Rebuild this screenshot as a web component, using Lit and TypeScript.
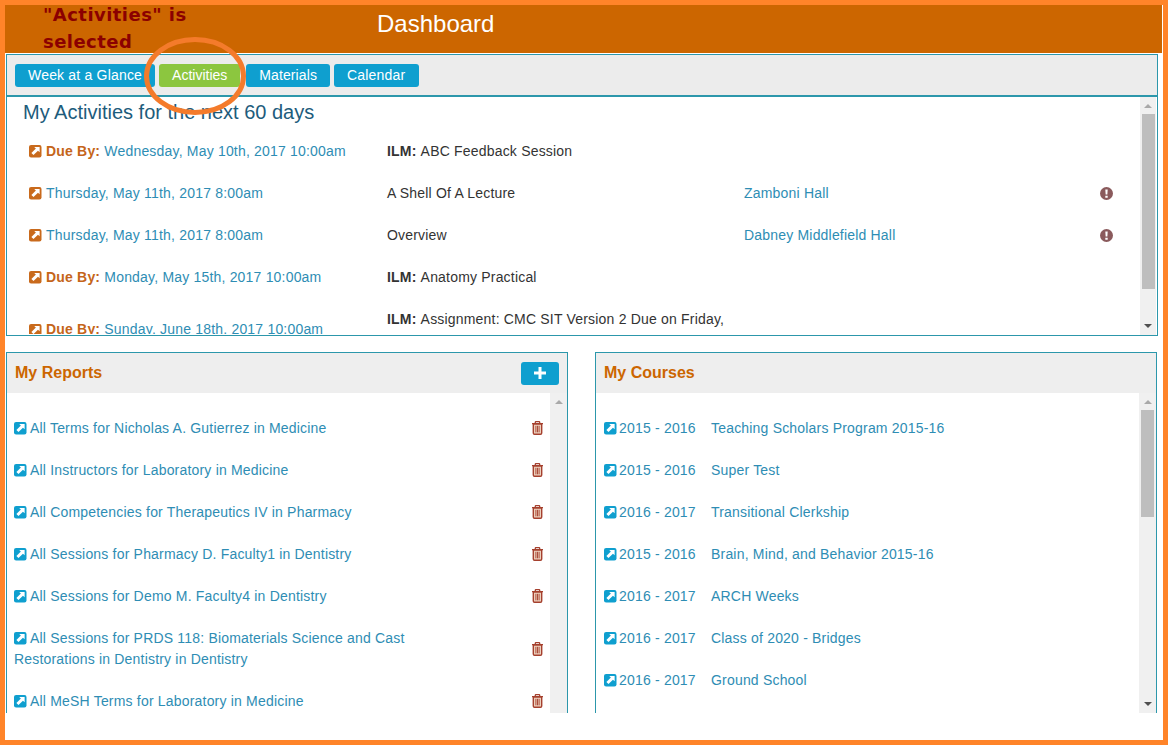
import { LitElement, html, css } from 'lit';
import { customElement } from 'lit/decorators.js';

const linkIcon = (tone: string) => html`<svg class="ico ${tone}" viewBox="0 0 12 12">
  <rect width="12" height="12" rx="2" fill="currentColor"></rect>
  <path d="M5 1.800H10.200V7L8.600 5.400 4.300 9.700 2.300 7.700 6.600 3.400z" fill="#fff"></path>
</svg>`;

const trashIcon = html`<svg class="trash" viewBox="0 0 11 14">
  <path d="M0 2.700h11M3.300 2.500V1.300q0-.7.7-.7h3q.7 0 .7.7v1.200" fill="none" stroke="currentColor" stroke-width="1.300"></path>
  <path d="M1.300 3v9q0 1.300 1.200 1.300h6q1.200 0 1.200-1.300V3z" fill="#ecd0bd" stroke="currentColor" stroke-width="1.400"></path>
  <path d="M3.900 4.800v6.500M5.500 4.800v6.500M7.100 4.800v6.500" stroke="currentColor" stroke-width=".9"></path>
</svg>`;

const alertIcon = html`<svg class="alert" viewBox="0 0 12 12">
  <circle cx="6" cy="6" r="6" fill="currentColor"></circle>
  <path d="M4.900 2.200h2.200l-.3 4.800H5.200zM4.900 8h2.200v2H4.900z" fill="#fff"></path>
</svg>`;

const activities = [
  { due: true, date: 'Wednesday, May 10th, 2017 10:00am', ilm: true, title: 'ABC Feedback Session', place: '', alert: false },
  { due: false, date: 'Thursday, May 11th, 2017 8:00am', ilm: false, title: 'A Shell Of A Lecture', place: 'Zamboni Hall', alert: true },
  { due: false, date: 'Thursday, May 11th, 2017 8:00am', ilm: false, title: 'Overview', place: 'Dabney Middlefield Hall', alert: true },
  { due: true, date: 'Monday, May 15th, 2017 10:00am', ilm: true, title: 'Anatomy Practical', place: '', alert: false },
  { due: true, date: 'Sunday, June 18th, 2017 10:00am', ilm: true, title: 'Assignment: CMC SIT Version 2 Due on Friday, June 16th', place: '', alert: false },
];

const reports = [
  'All Terms for Nicholas A. Gutierrez in Medicine',
  'All Instructors for Laboratory in Medicine',
  'All Competencies for Therapeutics IV in Pharmacy',
  'All Sessions for Pharmacy D. Faculty1 in Dentistry',
  'All Sessions for Demo M. Faculty4 in Dentistry',
  'All Sessions for PRDS 118: Biomaterials Science and Cast Restorations in Dentistry in Dentistry',
  'All MeSH Terms for Laboratory in Medicine',
];

const courses = [
  ['2015 - 2016', 'Teaching Scholars Program 2015-16'],
  ['2015 - 2016', 'Super Test'],
  ['2016 - 2017', 'Transitional Clerkship'],
  ['2015 - 2016', 'Brain, Mind, and Behavior 2015-16'],
  ['2016 - 2017', 'ARCH Weeks'],
  ['2016 - 2017', 'Class of 2020 - Bridges'],
  ['2016 - 2017', 'Ground School'],
];

@customElement('app-root')
export class AppRoot extends LitElement {
  static styles = css`
    :host {
      display: block;
      position: relative;
      height: 748px;
      overflow: hidden;
      background: #fff;
      font-family: 'Liberation Sans', Arial, sans-serif;
      font-size: 14px;
      line-height: 21px;
      letter-spacing: 0.19px;
      color: #333;
    }
    a { color: #2e8db4; text-decoration: none; }

    .frame {
      box-sizing: border-box;
      height: 745px;
      border: 5px solid #ff8429;
      display: flex;
      flex-direction: column;
      overflow: hidden;
    }

    .topbar {
      flex: none;
      height: 48px;
      margin-right: 1px;
      background: #cc6600;
      display: flex;
      align-items: center;
      box-sizing: border-box;
      padding-left: 38px;
    }
    .note {
      width: 334px;
      flex: none;
      margin-bottom: 3px;
      color: #8b0000;
      font-family: 'DejaVu Sans', sans-serif;
      font-weight: bold;
      font-size: 18px;
      line-height: 27px;
      letter-spacing: 0.45px;
    }
    .note span { display: block; }
    .topbar h1 {
      margin: 0 0 10px;
      color: #fff;
      font-size: 24px;
      font-weight: normal;
      line-height: 30px;
      letter-spacing: 0;
    }

    .activity-panel {
      flex: none;
      height: 282px;
      margin: 1px 5px 0 1px;
      border: 1px solid #2c97ab;
      box-sizing: border-box;
      display: flex;
      flex-direction: column;
      overflow: hidden;
    }
    .tabs {
      flex: none;
      height: 42px;
      background: #ececec;
      border-bottom: 2px solid #2c97ab;
      box-sizing: border-box;
      padding-top: 9px;
      padding-left: 8px;
      display: flex;
      gap: 4px;
    }
    .tab {
      height: 23px;
      line-height: 23px;
      padding: 0 13px;
      border-radius: 3px;
      background: #0f9fcf;
      color: #fff;
    }
    .tab.on { background: #8cc63f; letter-spacing: 0; margin-right: 2px; }
    .tab.mid { letter-spacing: 0.1px; }
    .tab.last { padding-right: 14px; }

    .activity-body { flex: 1; min-height: 0; display: flex; }
    .activity-scroll { flex: 1; min-width: 0; overflow: hidden; margin-bottom: 1px; }
    .activity-scroll h2 {
      margin: 2px 0 0 16px;
      font-size: 20px;
      font-weight: normal;
      line-height: 27px;
      letter-spacing: 0;
      color: #1d5c7c;
    }
    .activity-list { padding: 4px 0 0 22px; }
    .activity {
      display: grid;
      grid-template-columns: 358px 357px 1fr 13px;
      align-items: center;
      padding: 10.5px 27px 10.5px 0;
    }
    .activity .title { padding-right: 15px; }
    .when { white-space: nowrap; }
    .when .ico { margin-right: 4.500px; }
    .due { color: #c5651a; font-weight: bold; }
    .ilm { font-weight: bold; }

    .ico { width: 12.500px; height: 12.500px; vertical-align: -2px; margin-right: 3.500px; }
    .ico.brown { color: #c96a1c; }
    .ico.blue { color: #0f9fcf; }
    .alert { display: block; width: 13px; height: 13px; color: #8a5a5c; }
    .trash { display: block; width: 11px; height: 14px; color: #a5402e; }

    .columns {
      flex: 1;
      min-height: 0;
      display: grid;
      grid-template-columns: 562px 562px;
      justify-content: space-between;
      margin: 16px 1px 27px 1px;
      width: 1151px;
    }
    .panel {
      border: 1px solid #2c97ab;
      border-bottom: 0;
      display: flex;
      flex-direction: column;
      min-height: 0;
      overflow: hidden;
    }
    .panel-head {
      flex: none;
      height: 40px;
      background: #eee;
      display: flex;
      align-items: center;
      justify-content: space-between;
      padding: 0 8px;
    }
    .panel-head h3 {
      margin: 0;
      font-size: 16px;
      line-height: 40px;
      letter-spacing: 0;
      color: #cc6600;
    }
    .add {
      width: 38px;
      height: 23px;
      border-radius: 3px;
      background: #0f9fcf;
      display: flex;
      align-items: center;
      justify-content: center;
    }
    .add svg { width: 12px; height: 12px; display: block; }

    .panel-body { flex: 1; min-height: 0; display: flex; }
    .rows { flex: 1; min-width: 0; overflow: hidden; padding-top: 14px; }
    .report {
      display: grid;
      grid-template-columns: 430px 1fr 11px;
      align-items: center;
      padding: 10.5px 7px 10.5px 7px;
    }
    .course {
      display: grid;
      grid-template-columns: 107px 1fr;
      padding: 10.5px 8px;
    }
    .year { white-space: nowrap; }
    .year .ico { margin-right: 2.500px; }

    .bar {
      flex: none;
      width: 17px;
      background: #f0f0f0;
      display: flex;
      flex-direction: column;
      align-items: center;
    }
    .bar.narrow { width: 16px; margin-right: 1px; }
    .bar.narrow .thumb { margin-left: 1px; }
    .arrow {
      flex: none;
      width: 0;
      height: 0;
      border-left: 4px solid transparent;
      border-right: 4px solid transparent;
    }
    .arrow.up { border-bottom: 4px solid #a9a9a9; margin-top: 7px; }
    .arrow.down { border-top: 4px solid #505050; margin-top: auto; margin-bottom: 7px; }
    .thumb { flex: none; width: 13px; background: #bebebe; margin-top: 6px; }

    .circle {
      position: absolute;
      left: 140px;
      top: 32px;
      width: 112px;
      height: 90px;
      pointer-events: none;
    }
  `;

  render() {
    return html`
      <div class="frame">
        <header class="topbar">
          <div class="note"><span>"Activities" is</span><span>selected</span></div>
          <h1>Dashboard</h1>
        </header>

        <section class="activity-panel">
          <nav class="tabs">
            <a class="tab">Week at a Glance</a>
            <a class="tab on">Activities</a>
            <a class="tab mid">Materials</a>
            <a class="tab last">Calendar</a>
          </nav>
          <div class="activity-body">
            <div class="activity-scroll">
              <h2>My Activities for the next 60 days</h2>
              <div class="activity-list">
                ${activities.map((a) => html`
                  <div class="activity">
                    <div class="when">${linkIcon('brown')}${a.due ? html`<span class="due">Due By: </span>` : ''}<a>${a.date}</a></div>
                    <div class="title">${a.ilm ? html`<span class="ilm">ILM: </span>` : ''}${a.title}</div>
                    <div><a>${a.place}</a></div>
                    ${a.alert ? alertIcon : html`<span></span>`}
                  </div>
                `)}
              </div>
            </div>
            <div class="bar narrow">
              <div class="arrow up"></div>
              <div class="thumb" style="height: 175px"></div>
              <div class="arrow down"></div>
            </div>
          </div>
        </section>

        <div class="columns">
          <section class="panel">
            <div class="panel-head">
              <h3>My Reports</h3>
              <a class="add"><svg viewBox="0 0 12 12"><path d="M4.500 0h3v4.500H12v3H7.500V12h-3V7.500H0v-3h4.500z" fill="#fff"></path></svg></a>
            </div>
            <div class="panel-body">
              <div class="rows">
                ${reports.map((r) => html`
                  <div class="report">
                    <div>${linkIcon('blue')}<a>${r}</a></div>
                    <span></span>
                    ${trashIcon}
                  </div>
                `)}
              </div>
              <div class="bar"><div class="arrow up"></div></div>
            </div>
          </section>

          <section class="panel">
            <div class="panel-head"><h3>My Courses</h3></div>
            <div class="panel-body">
              <div class="rows">
                ${courses.map(([year, name]) => html`
                  <div class="course">
                    <div class="year">${linkIcon('blue')}<a>${year}</a></div>
                    <a>${name}</a>
                  </div>
                `)}
              </div>
              <div class="bar">
                <div class="arrow up"></div>
                <div class="thumb" style="height: 107px"></div>
                <div class="arrow down"></div>
              </div>
            </div>
          </section>
        </div>
      </div>

      <svg class="circle" viewBox="0 0 112 90">
        <ellipse cx="55" cy="44" rx="48.500" ry="36.500" fill="none" stroke="#f47b2b" stroke-width="5"></ellipse>
      </svg>
    `;
  }
}
